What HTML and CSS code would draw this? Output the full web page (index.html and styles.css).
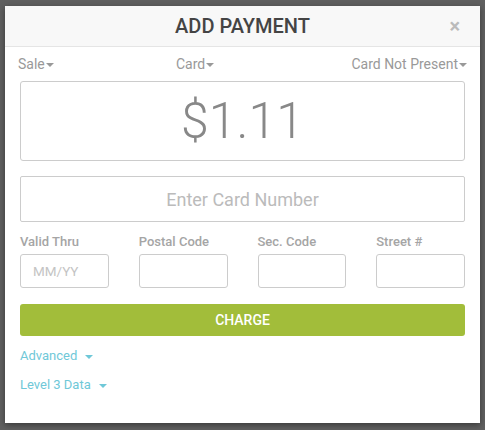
FILE: index.html
```html
<!DOCTYPE html>
<html>
<head>
<meta charset="utf-8">
<link rel="stylesheet" href="styles.css">
</head>
<body>
<div class="modal">
  <div class="modal-header">
    <h1 class="title">ADD PAYMENT</h1>
    <span class="close">&times;</span>
  </div>
  <div class="modal-body">
    <div class="selectors">
      <span class="sel">Sale<i class="caret"></i></span>
      <span class="sel">Card<i class="caret"></i></span>
      <span class="sel sel-right">Card Not Present<i class="caret"></i></span>
    </div>
    <div class="amount">$1.11</div>
    <div class="card-input">Enter Card Number</div>
    <div class="fields">
      <div class="field"><label>Valid Thru</label><div class="box placeholder">MM/YY</div></div>
      <div class="field"><label>Postal Code</label><div class="box"></div></div>
      <div class="field"><label>Sec. Code</label><div class="box"></div></div>
      <div class="field"><label>Street #</label><div class="box"></div></div>
    </div>
    <button class="charge">CHARGE</button>
    <div class="links">
      <a class="link">Advanced<i class="caret"></i></a>
      <a class="link">Level 3 Data<i class="caret"></i></a>
    </div>
  </div>
</div>
</body>
</html>
```
FILE: styles.css
```css
html, body { margin: 0; padding: 0; }
body {
  background: #5f5f5f;
  font-family: Roboto, "Liberation Sans", sans-serif;
  width: 485px;
  height: 430px;
  overflow: hidden;
  padding: 6px 5px 0 5px;
  box-sizing: border-box;
}
.modal {
  background: #fff;
  width: 475px;
  height: 417px;
  box-shadow: 0 2px 6px rgba(0,0,0,0.4);
}
.modal-header {
  position: relative;
  height: 40px;
  background: #f8f8f8;
  border-bottom: 1px solid #e5e5e5;
  display: flex;
  align-items: center;
  justify-content: center;
}
.title {
  margin: 0;
  font-size: 20px;
  font-weight: 500;
  color: #444;
}
.close {
  position: absolute;
  right: 20px;
  top: 10px;
  font-size: 20px;
  color: #bbb;
  font-weight: 700;
  line-height: 20px;
}
.modal-body {
  padding: 8px 15px 0 15px;
}
.selectors {
  display: grid;
  grid-template-columns: 158px 1fr auto;
  font-size: 14px;
  color: #999;
  height: 18px;
  line-height: 18px;
  margin-right: -2px;
  margin-left: -2px;
}
.caret {
  display: inline-block;
  width: 0; height: 0;
  border-left: 4px solid transparent;
  border-right: 4px solid transparent;
  border-top: 4px solid #999;
  vertical-align: middle;
  margin-left: 1px;
}
.amount {
  margin-top: 8px;
  height: 78px;
  border: 1px solid #ccc;
  border-radius: 3px;
  display: flex;
  align-items: center;
  justify-content: center;
  font-size: 50px;
  font-weight: 300;
  color: #888;
}
.card-input {
  margin-top: 15px;
  height: 44px;
  border: 1px solid #ccc;
  border-radius: 2px;
  display: flex;
  align-items: center;
  justify-content: center;
  font-size: 18px;
  color: #bbb;
}
.fields {
  margin-top: 11px;
  display: grid;
  grid-template-columns: repeat(4, 1fr);
  column-gap: 30px;
}
.field label {
  display: block;
  font-size: 13px;
  font-weight: 500;
  color: #a5a5a5;
  height: 17px;
  line-height: 17px;
  margin-bottom: 4px;
}
.box {
  height: 32px;
  border: 1px solid #ccc;
  border-radius: 3px;
  display: flex;
  align-items: center;
  padding-left: 12px;
  font-size: 13.5px;
  color: #c4c4c4;
}
.charge {
  display: block;
  width: 100%;
  margin-top: 16px;
  height: 32px;
  border: none;
  border-radius: 3px;
  background: #a2bd3a;
  color: #fff;
  font-family: inherit;
  font-size: 14px;
  font-weight: 500;
}
.links {
  margin-top: 11px;
  display: flex;
  flex-direction: column;
  align-items: flex-start;
  gap: 11px;
}
.link {
  font-size: 13px;
  color: #6fc8d8;
  line-height: 18px;
}
.link .caret {
  border-top-color: #6fc8d8;
  margin-left: 8px;
}
```
